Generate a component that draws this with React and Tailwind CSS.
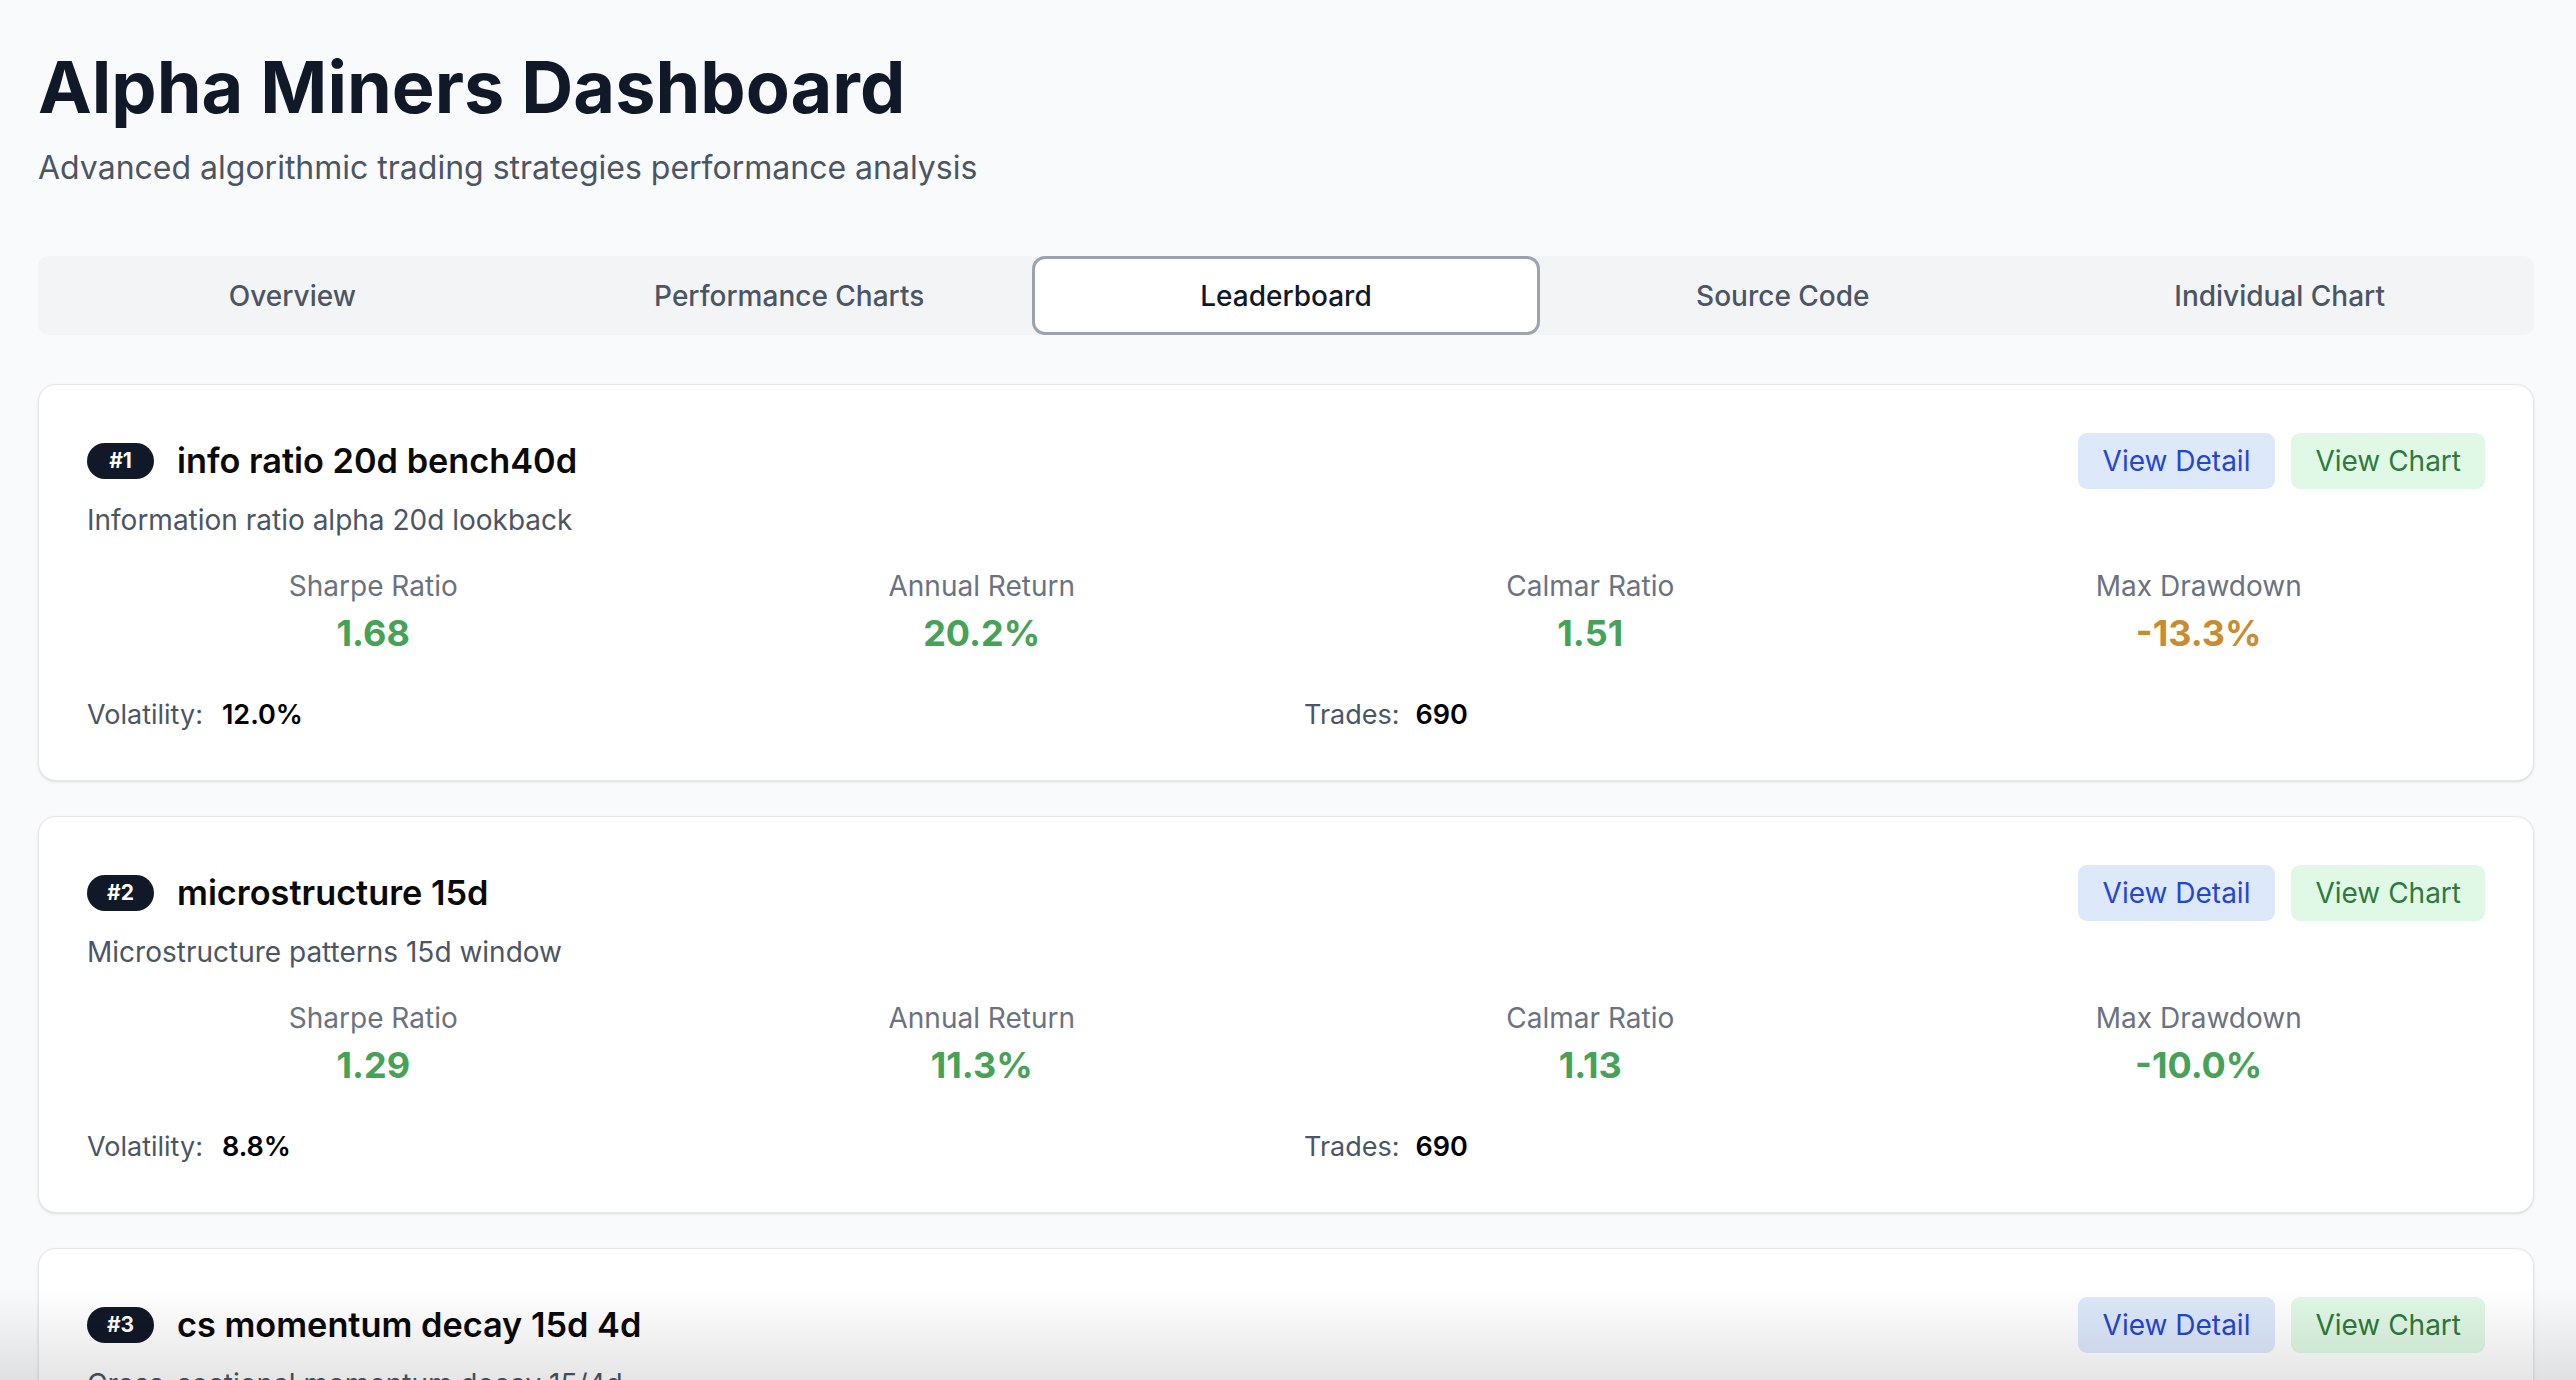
import React, { useState } from 'react';

const TABS = ['Overview', 'Performance Charts', 'Leaderboard', 'Source Code', 'Individual Chart'];

const STRATEGIES = [
  {
    rank: 1,
    name: 'info ratio 20d bench40d',
    description: 'Information ratio alpha 20d lookback',
    sharpe: '1.68',
    annual: '20.2%',
    calmar: '1.51',
    drawdown: '-13.3%',
    drawdownWarn: true,
    volatility: '12.0%',
    trades: '690',
  },
  {
    rank: 2,
    name: 'microstructure 15d',
    description: 'Microstructure patterns 15d window',
    sharpe: '1.29',
    annual: '11.3%',
    calmar: '1.13',
    drawdown: '-10.0%',
    drawdownWarn: false,
    volatility: '8.8%',
    trades: '690',
  },
  {
    rank: 3,
    name: 'cs momentum decay 15d 4d',
    description: 'Cross-sectional momentum decay 15/4d',
    sharpe: '1.21',
    annual: '10.4%',
    calmar: '1.02',
    drawdown: '-10.2%',
    drawdownWarn: false,
    volatility: '8.6%',
    trades: '690',
  },
];

const Metric = ({ label, value, warn }) => (
  <div className="flex flex-col items-center">
    <span className="text-[28px] leading-[40px] text-[#6b7280]">{label}</span>
    <span
      className={`mt-[3px] text-[36px] leading-[48px] font-bold ${warn ? 'text-[#c98c2f]' : 'text-[#46a257]'}`}
    >
      {value}
    </span>
  </div>
);

const StrategyCard = ({ s }) => (
  <div className="bg-white border-[1.5px] border-[#e5e7eb] rounded-[18px] shadow-sm px-[48px] pt-[48px] pb-[45px]">
    {/* header */}
    <div className="flex items-center justify-between h-[56px]">
      <div className="flex items-center gap-[23px]">
        <span className="flex items-center justify-center h-[36px] min-w-[67px] px-[16px] rounded-full bg-[#111827] text-white text-[21px] font-bold">
          #{s.rank}
        </span>
        <h3 className="text-[34.3px] leading-[48px] font-semibold text-[#0a0a0a]">{s.name}</h3>
      </div>
      <div className="flex items-center gap-[16px]">
        <button className="h-[56px] px-[25px] rounded-[9px] bg-[#dde8fb] text-[#2446d2] text-[28px]">
          View Detail
        </button>
        <button className="h-[56px] px-[24px] rounded-[9px] bg-[#e0f8e6] text-[#2f7a3c] text-[28px]">
          View Chart
        </button>
      </div>
    </div>

    <p className="mt-[11px] text-[28px] leading-[40px] text-[#4b5563]">{s.description}</p>

    {/* metrics */}
    <div className="mt-[26px] grid grid-cols-4 gap-[36px]">
      <Metric label="Sharpe Ratio" value={s.sharpe} />
      <Metric label="Annual Return" value={s.annual} />
      <Metric label="Calmar Ratio" value={s.calmar} />
      <Metric label="Max Drawdown" value={s.drawdown} warn={s.drawdownWarn} />
    </div>

    <div className="mt-[38px] grid grid-cols-2 gap-[36px] text-[27px] leading-[40px]">
      <div>
        <span className="text-[#4b5563]">Volatility:</span>
        <span className="ml-[19px] font-semibold text-black">{s.volatility}</span>
      </div>
      <div>
        <span className="text-[#4b5563]">Trades:</span>
        <span className="ml-[16px] font-semibold text-black">{s.trades}</span>
      </div>
    </div>
  </div>
);

export default function App() {
  const [active, setActive] = useState('Leaderboard');

  return (
    <div className="min-h-screen bg-[#f9fafb] font-['Inter',sans-serif]">
      <div className="pl-[38px] pr-[42px] pt-[51px] pb-[60px]">
        <h1 className="text-[72px] leading-[72px] font-bold text-[#111827]">
          Alpha Miners Dashboard
        </h1>
        <p className="mt-[25px] text-[32px] leading-[40px] text-[#4b5563]">
          Advanced algorithmic trading strategies performance analysis
        </p>

        {/* tabs */}
        <div className="mt-[68px] grid grid-cols-5 h-[79px] p-[6px] rounded-[10px] bg-[#f3f4f6]">
          {TABS.map(t => (
            <button
              key={t}
              onClick={() => setActive(t)}
              className={
                t === active
                  ? 'flex items-center justify-center rounded-[7px] bg-white shadow-[0_0_0_3px_#ffffff,0_0_0_6px_#9ca3af] text-[28px] font-medium text-[#111827]'
                  : 'flex items-center justify-center text-[28px] font-medium text-[#4b5563]'
              }
            >
              {t}
            </button>
          ))}
        </div>

        {/* leaderboard */}
        <div className="mt-[49px] flex flex-col gap-[35px]">
          {STRATEGIES.map(s => (
            <StrategyCard key={s.rank} s={s} />
          ))}
        </div>
      </div>

      {/* bottom fade */}
      <div className="pointer-events-none fixed inset-x-0 bottom-0 h-[92px] bg-gradient-to-b from-transparent to-black/10" />
    </div>
  );
}
